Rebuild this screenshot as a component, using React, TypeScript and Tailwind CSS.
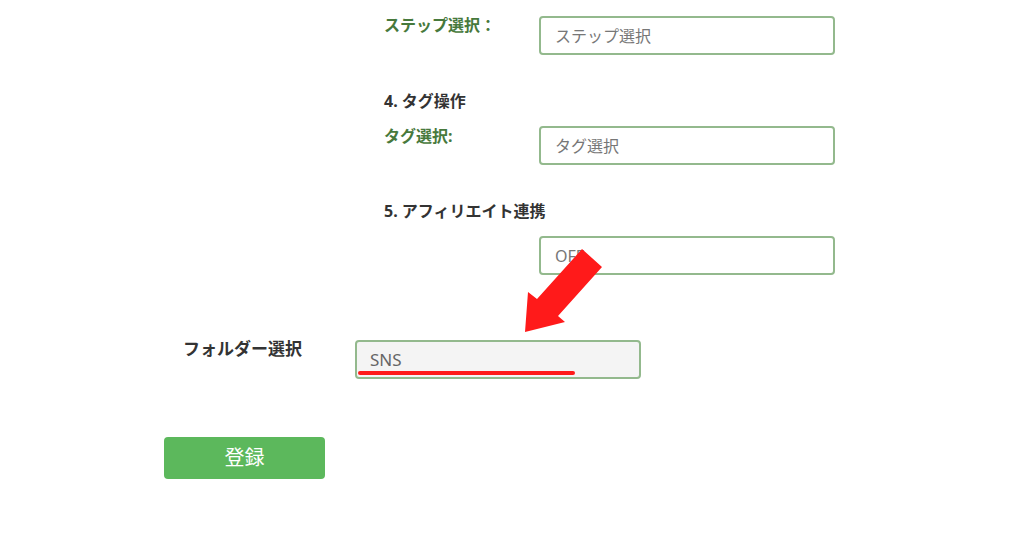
import React from 'react';

const font = { fontFamily: '"Noto Sans", "Noto Sans CJK JP", sans-serif' };

function Field({ text, className = '' }: { text: string; className?: string }) {
  return (
    <div
      className={`h-[39px] w-[296px] rounded-[4px] border-2 border-[#93b98d] bg-white pl-[14px] flex items-center text-[16px] text-[#777] ${className}`}
    >
      {text}
    </div>
  );
}

export default function App() {
  return (
    <div className="relative w-[1024px] h-[538px] overflow-hidden bg-white" style={font}>
      {/* step settings */}
      <div className="pl-[384px] pt-[16px]">
        <div className="flex items-start">
          <span className="w-[155px] -mt-[1px] text-[16px] leading-[20px] font-bold text-[#47793c]">ステップ選択：</span>
          <Field text="ステップ選択" />
        </div>

        <h3 className="mt-[36px] text-[16px] leading-[20px] font-bold text-[#333]">4. タグ操作</h3>
        <div className="mt-[15px] flex items-start">
          <span className="w-[155px] text-[16px] leading-[20px] font-bold text-[#47793c]">タグ選択:</span>
          <Field text="タグ選択" />
        </div>

        <h3 className="mt-[36px] text-[16px] leading-[20px] font-bold text-[#333]">5. アフィリエイト連携</h3>
        <div className="mt-[15px] flex items-start">
          <span className="w-[155px]" />
          <Field text="OFF" />
        </div>
      </div>

      {/* folder */}
      <div className="mt-[65px] pl-[183px] flex items-start">
        <span className="w-[172px] -mt-[3px] text-[17px] leading-[24px] font-bold text-[#333]">フォルダー選択</span>
        <div className="relative h-[39px] w-[286px] rounded-[4px] border-2 border-[#93b98d] bg-[#f4f4f4] pl-[13px] flex items-center text-[17px] text-[#666]">
          SNS
          <span className="absolute left-[1px] top-[29px] h-[4px] w-[217px] rounded-full bg-[#ff1a1a]" />
        </div>
      </div>

      <div className="mt-[58px] pl-[164px]">
        <button className="h-[42px] w-[161px] rounded-[4px] bg-[#5cb85c] text-[20px] text-white flex items-center justify-center">
          登録
        </button>
      </div>

      {/* annotation arrow */}
      <svg className="pointer-events-none absolute left-0 top-0" width="1024" height="538" viewBox="0 0 1024 538">
        <polygon
          points="582,249 602,267 558,316 565,322 525,332 528,292 537,299"
          fill="#ff1a1a"
        />
      </svg>
    </div>
  );
}
